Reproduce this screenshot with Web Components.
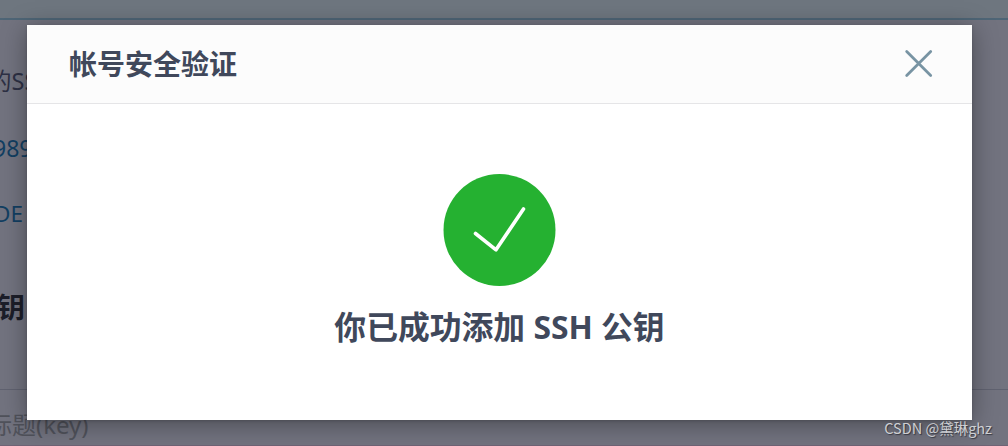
<!DOCTYPE html>
<html lang="zh-CN">
<head>
<meta charset="utf-8">
<title>SSH 公钥</title>
<style>
html,body{margin:0;height:446px;overflow:hidden}
body{font-family:"Noto Sans","Noto Sans CJK SC",sans-serif;position:relative;background:#72737f}
</style>
</head>
<body>
<settings-page></settings-page>
<modal-dialog>
  <span slot="title">帐号安全验证</span>
  <success-icon></success-icon>
  <result-text>你已成功添加 SSH 公钥</result-text>
</modal-dialog>
<water-mark>CSDN @黛琳ghz</water-mark>
<script>
const define = (name, html) => customElements.define(name, class extends HTMLElement {
  constructor() {
    super();
    this.attachShadow({mode: 'open'}).innerHTML = html;
  }
});
define('settings-page', `<style>
:host{display:block;height:446px;overflow:hidden;background:#72737f;color:#2d3044;font-size:23.5px}
header{height:18px;background:#6e767f;border-bottom:2px solid #4e6576}
main{display:flex;flex-direction:column;white-space:nowrap}
p{margin:0;height:66px;line-height:66px}
.intro{margin:28px 0 0 -12px}
.a{color:#123f62;margin-left:-7px;font-size:23px;line-height:68px}
.b{color:#123f62;margin-left:-6px;font-size:22.5px;line-height:67px}
h2{margin:28px 0 0 -3px;font-size:28px;line-height:66px;height:66px;color:#1c1e29}
hr{margin:49px 0 0;border:0;border-top:1px solid #606270;height:0}
.field{color:#50525b;margin-left:-12px;height:55px;line-height:70px;font-size:24px;border-bottom:1px solid #6f6375}
</style>
<header></header>
<main><p class="intro">的SSH</p><p class="a">989</p><p class="b">DE</p><h2>钥</h2><hr><p class="field">标题(key)</p></main>`);
define('modal-dialog', `<style>
:host{position:absolute;left:27px;top:25px;width:945px;height:395px;display:flex;flex-direction:column;background:#fff;color:#40485b;box-shadow:0 4px 24px rgba(0,0,0,.36),0 1px 3px rgba(0,0,0,.15)}
header{height:78px;display:flex;align-items:center;justify-content:space-between;padding:0 38px 0 42px;background:#fcfcfc;border-bottom:1px solid #e5e5e7}
.t{font-size:28px;font-weight:700;line-height:40px}
section{display:flex;flex-direction:column;align-items:center;padding-top:70px}
svg{display:block}
</style>
<header><span class="t"><slot name="title"></slot></span>
<svg width="30" height="30" viewBox="0 0 30 30" fill="none" stroke="#7894a3" stroke-width="2.8" stroke-linecap="round"><path d="M2.7 2.5 26.7 26.5M26.7 2.5 2.7 26.5"/></svg></header>
<section><slot></slot></section>`);
define('success-icon', `<style>:host{display:block;width:112px;height:112px;margin-right:1px}svg{display:block;overflow:visible}</style>
<svg width="112" height="112" viewBox="0 0 112 112"><circle cx="56.5" cy="56" r="56" fill="#25b131"/><path d="M32.5 59.5 53 75.8 80.5 35" fill="none" stroke="#fff" stroke-width="3.6" stroke-linecap="round" stroke-linejoin="round"/></svg>`);
define('result-text', `<style>:host{display:block;margin-top:18px;font-size:31.8px;font-weight:700;line-height:46px;white-space:nowrap}</style><slot></slot>`);
define('water-mark', `<style>:host{position:absolute;right:16px;bottom:8px;font:14.5px/20px "Noto Sans CJK SC",sans-serif;color:#cecfd2;text-shadow:1px 1px 1px #363842;white-space:nowrap}</style><slot></slot>`);
</script>
</body>
</html>
